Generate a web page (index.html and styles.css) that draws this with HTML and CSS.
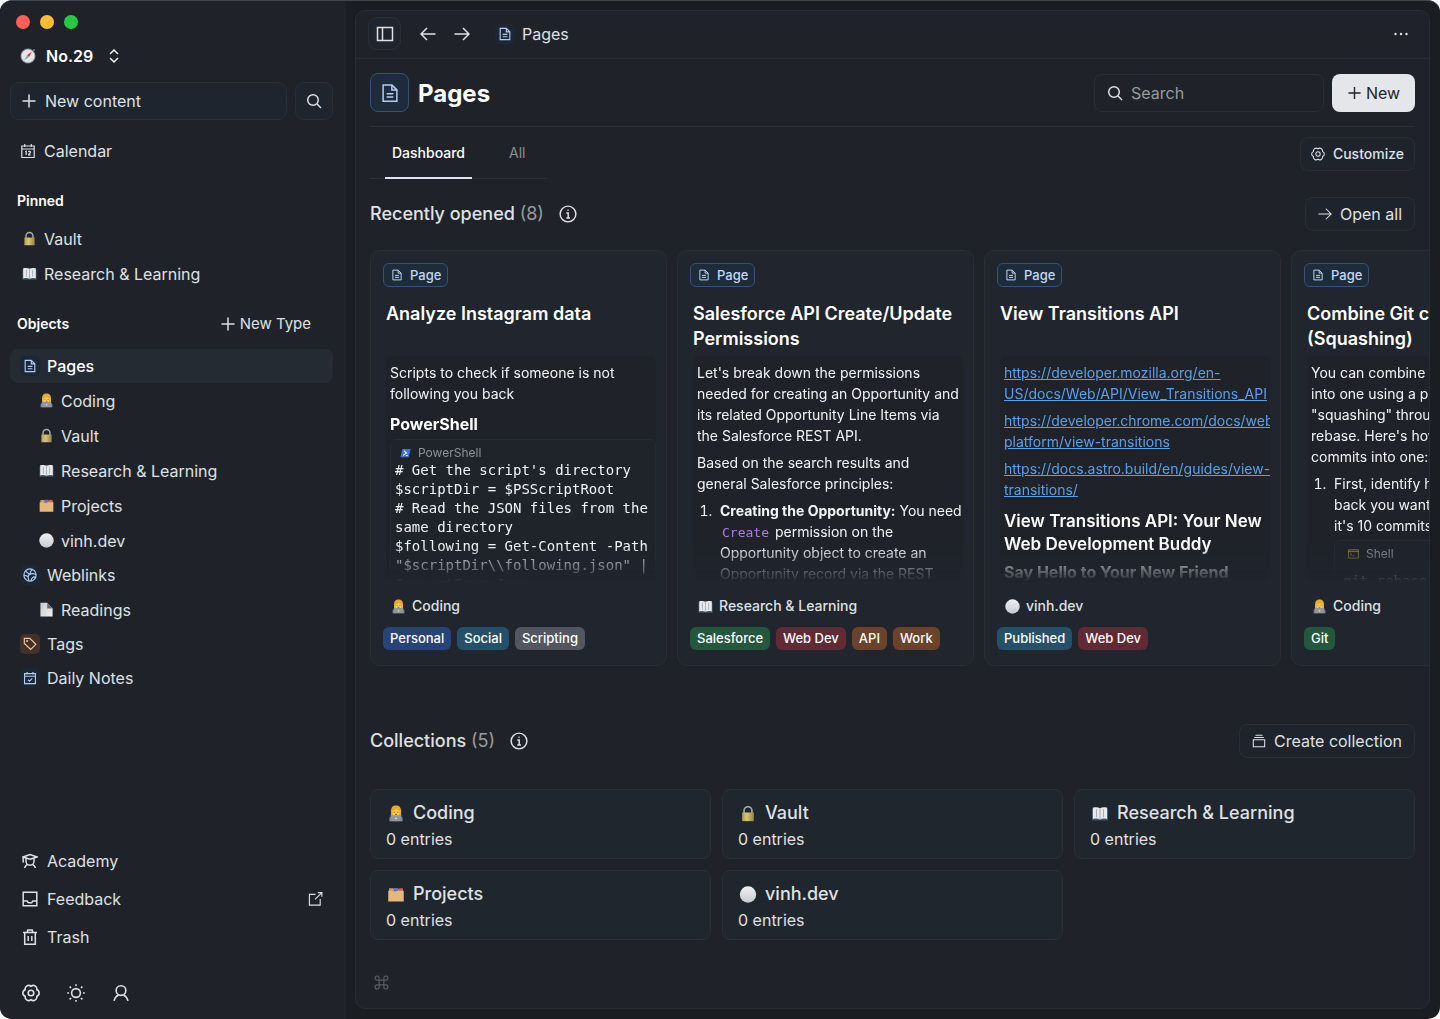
FILE: index.html
```html
<!DOCTYPE html>
<html lang="en">
<head>
    <meta charset="UTF-8">
    <meta name="viewport" content="width=device-width, initial-scale=1">
    <title>Pages</title>
    <link rel="stylesheet" href="styles.css">
</head>
<body>

    <!-- Icon sprite -->
    <svg class="sprite" aria-hidden="true">
        <symbol id="i-page" viewBox="0 0 16 16"><path d="M2.5 1.5h7l4 4v9h-11zM9.5 1.5v4h4M5.3 8.5h5.4M5.3 11.2h5.4"/></symbol>
        <symbol id="i-plus" viewBox="0 0 16 16"><path d="M8 1.5v13M1.5 8h13"/></symbol>
        <symbol id="i-search" viewBox="0 0 16 16"><circle cx="7" cy="7" r="5.3"/><path d="M11 11l4 4"/></symbol>
        <symbol id="i-updown" viewBox="0 0 12 16"><path d="M2 6l4-4 4 4M2 10l4 4 4-4"/></symbol>
        <symbol id="i-calendar" viewBox="0 0 16 16"><path d="M1.8 3h12.4v11.5H1.8zM1.8 6h12.4M4.7 1v3M11.3 1v3M5.2 9l1-.6V12M8.5 9c.3-.9 2.2-.8 2 .4C10.3 10.3 8.5 11 8.5 12h2.3"/></symbol>
        <symbol id="i-daily" viewBox="0 0 16 16"><path d="M1.8 3h12.4v11.5H1.8zM1.8 6h12.4M4.7 1v3M11.3 1v3M5.7 10l1.7 1.7 3.2-3.2"/></symbol>
        <symbol id="i-globe" viewBox="0 0 16 16"><circle cx="8" cy="8" r="7"/><path d="M3 3c1 2.8 3 2.5 5 4M10.8 1.7C8.7 3 8 4.5 8 7M8 7c2.5-.8 4.5-.8 6.8.5M8 7c-2 1-2.500 3-2 4.500s.8 2.200.5 3.200M1 8c1.800.2 3.500.8 5 2.500M9 15c.2-2 1-3.800 3-4.800l2.500.2"/></symbol>
        <symbol id="i-tag" viewBox="0 0 16 16"><path d="M1.5 1.5h6.3l6.9 6.9-5.9 5.9-7.3-6.9z"/><circle cx="4.7" cy="4.7" r=".5"/></symbol>
        <symbol id="i-academy" viewBox="0 0 16 16"><path d="M1 4l7-2.500L15 4 8 6.200zM1.200 4v5.500M4 5.200v3a4 4 0 0 0 8 0v-3M2.500 15c.6-1.900 1.600-3 3.200-3.700M13.500 15c-.6-1.900-1.600-3-3.200-3.700"/></symbol>
        <symbol id="i-inbox" viewBox="0 0 16 16"><path d="M1.2 1.2h13.6v13.6H1.2zM1.2 10h4l1.2 1.8h3.2L10.8 10h4"/></symbol>
        <symbol id="i-trash" viewBox="0 0 16 16"><path d="M1 3.5h14M2.7 3.5v11.7h10.6V3.5M5.2 3.5l.6-2.4h4.4l.6 2.4M6.2 7v5M9.8 7v5"/></symbol>
        <symbol id="i-external" viewBox="0 0 16 16"><path d="M8 3H1.5v11.5H13V8M10.5 1.2h4.3v4.3M14.5 1.5l-7 7"/></symbol>
        <symbol id="i-gear" viewBox="0 0 16 16"><path stroke-linejoin="round" d="M8 2.1A3.1 3.1 0 0 1 13.1 5.05A3.1 3.1 0 0 1 13.1 10.95A3.1 3.1 0 0 1 8 13.9A3.1 3.1 0 0 1 2.9 10.95A3.1 3.1 0 0 1 2.9 5.05A3.1 3.1 0 0 1 8 2.1z"/><circle cx="8" cy="8" r="2.5"/></symbol>
        <symbol id="i-sun" viewBox="0 0 16 16"><circle cx="8" cy="8" r="3.9"/><path d="M8 .2v1.6M8 14.2v1.6M.2 8h1.6M14.2 8h1.6M2.3 2.3l1.3 1.3M12.4 12.4l1.3 1.3M13.7 2.3l-1.3 1.3M3.6 12.4l-1.3 1.3"/></symbol>
        <symbol id="i-user" viewBox="0 0 16 16"><circle cx="8" cy="5.8" r="4.3"/><path d="M1.8 15c.7-2.7 2-4.3 4-5.2M14.2 15c-.7-2.7-2-4.3-4-5.2"/></symbol>
        <symbol id="i-sidebar" viewBox="0 0 18 16"><path d="M1.5 1.5h15v13h-15zM6.5 1.5v13"/></symbol>
        <symbol id="i-left" viewBox="0 0 16 16"><path d="M15.5 8H1M7 2L1 8l6 6"/></symbol>
        <symbol id="i-right" viewBox="0 0 16 16"><path d="M.5 8H15M9 2l6 6-6 6"/></symbol>
        <symbol id="i-dots" viewBox="0 0 16 16"><g fill="currentColor" stroke="none"><circle cx="2.5" cy="8" r="1.2"/><circle cx="8" cy="8" r="1.2"/><circle cx="13.5" cy="8" r="1.2"/></g></symbol>
        <symbol id="i-info" viewBox="0 0 16 16"><circle cx="8" cy="8" r="7"/><path d="M6.5 7.2h1.7v4M6.5 11.5h3.3M7.5 4.7h1"/></symbol>
        <symbol id="i-stack" viewBox="0 0 16 16"><path d="M1.5 6.5h13v8h-13zM2.5 4h11M4 1.5h8"/></symbol>
        <symbol id="i-command" viewBox="0 0 16 16"><path d="M5.5 5.5h5v5h-5zM5.5 5.5H3.3a2.2 2.2 0 1 1 2.2-2.2zM10.5 5.5V3.3a2.2 2.2 0 1 1 2.2 2.2zM10.5 10.5h2.2a2.2 2.2 0 1 1-2.2 2.2zM5.5 10.5v2.2a2.2 2.2 0 1 1-2.2-2.2z"/></symbol>

        <linearGradient id="g-ball" x2="0" y2="1"><stop stop-color="#f1f2f4"/><stop offset="1" stop-color="#c6c9cf"/></linearGradient>
        <linearGradient id="g-lock"><stop stop-color="#b09a50"/><stop offset=".4" stop-color="#d8c581"/><stop offset="1" stop-color="#948443"/></linearGradient>
        <linearGradient id="g-sheet" x2="1" y2="1"><stop stop-color="#c9cacc"/><stop offset="1" stop-color="#f0f0f0"/></linearGradient>
        <symbol id="e-compass" viewBox="0 0 16 16"><circle cx="14" cy="2" r="1" fill="#777"/><circle cx="8" cy="8" r="7.5" fill="#8f949a"/><circle cx="8" cy="8" r="6.5" fill="#e4e7ea"/><path d="M12 3.5L9 9 7 7.2z" fill="#d8352f"/><path d="M4 12.5L7 7.2 9 9z" fill="#9aa3ad"/></symbol>
        <symbol id="e-lock" viewBox="0 0 16 16"><path d="M4.3 8V5.3a3.7 3.7 0 0 1 7.4 0V8" fill="none" stroke="#a9aeb5" stroke-width="1.5"/><path d="M2.5 7h11v8.2h-11z" fill="url(#g-lock)"/></symbol>
        <symbol id="e-book" viewBox="0 0 16 16"><path d="M.5 3.5h15v11H.5z" fill="#3d5c74"/><path d="M1.3 2.5C4 1.7 6.5 2 8 3c1.5-1 4-1.3 6.7-.5v10.7C12 12.5 9.5 12.6 8 13.6c-1.5-1-4-1.1-6.7-.4z" fill="#e9eaed"/><path d="M8 3v10.5M4.7 4v7.5M11.3 4v7.5" stroke="#a3a7ae" stroke-width=".9" fill="none"/></symbol>
        <symbol id="e-coder" viewBox="0 0 16 16"><path d="M3.2 6C3.2 2 5 .5 8 .5s4.8 1.5 4.8 5.5v5H3.2z" fill="#e7a82c"/><path d="M4.8 5.5C6.5 5.3 8 4.5 8.5 3.6c.8 1.2 1.7 1.7 2.7 1.900v2C11.200 9.700 9.700 10.500 8 10.500S4.800 9.700 4.800 7.500z" fill="#ffd04c"/><path d="M6.3 6.3v1M9.7 6.3v1M7 8.8h2" stroke="#6b4514" stroke-width=".8"/><path d="M1.5 15.2V12l2-1.5h9l2 1.5v3.2z" fill="#4e6398"/><path d="M3 9.7h10l.7 5.5H2.3z" fill="#92969c"/><circle cx="8" cy="12.6" r=".8" fill="#dfe2e6"/></symbol>
        <symbol id="e-folder" viewBox="0 0 16 16"><path d="M1.5 2h4l1 1h8v6h-13z" fill="#d49b60"/><path d="M6 1.8h4V5H6z" fill="#5d71bd"/><path d="M10.5 2h4V5h-4z" fill="#d75a4b"/><path d="M.7 4.5h3.5l1 1h3l1-1h6.1v10.2H.7z" fill="#e5b880"/></symbol>
        <symbol id="e-ball" viewBox="0 0 16 16"><circle cx="8" cy="8" r="7.7" fill="url(#g-ball)"/></symbol>
        <symbol id="e-sheet" viewBox="0 0 16 16"><path d="M1.5.8h7.2l5.8 6v8.6h-13z" fill="url(#g-sheet)"/><path d="M8.7.8v6h5.8z" fill="#6b6e73"/></symbol>
        <symbol id="e-powershell" viewBox="0 0 16 14"><path d="M3.5 1h12l-3 12h-12z" fill="#3d73d6"/><path d="M5.5 3.5l4 3.5-5 3.5M8.5 10.5h3" fill="none" stroke="#fff" stroke-width="1.5"/></symbol>
        <symbol id="e-shell" viewBox="0 0 16 14"><path d="M.8 1h14.4v12H.8zM.8 3.5h14.4M3.5 6l2 1.5-2 1.5M6.8 9.5h2.5" fill="none" stroke="#a98b2a" stroke-width="1.2"/></symbol>
    </svg>

    <div class="window">
        <aside class="sidebar">
            <div class="lights"><span class="red"></span><span class="yellow"></span><span class="green"></span></div>

            <button class="workspace"><svg class="emoji"><use href="#e-compass"/></svg>No.29<svg class="icon"><use href="#i-updown"/></svg></button>

            <div class="create">
                <button class="box new-content"><svg class="icon"><use href="#i-plus"/></svg>New content</button>
                <button class="box find" aria-label="Search"><svg class="icon"><use href="#i-search"/></svg></button>
            </div>

            <a class="nav-link calendar" href="#"><svg class="icon"><use href="#i-calendar"/></svg>Calendar</a>

            <h2 class="side-title">Pinned</h2>
            <nav class="pinned">
                <a class="nav-link child" href="#"><svg class="emoji"><use href="#e-lock"/></svg>Vault</a>
                <a class="nav-link child" href="#"><svg class="emoji"><use href="#e-book"/></svg>Research &amp; Learning</a>
            </nav>

            <div class="objects-head">
                <h2 class="side-title">Objects</h2>
                <button class="new-type"><svg class="icon"><use href="#i-plus"/></svg>New Type</button>
            </div>
            <nav class="objects">
                <a class="nav-link active" href="#"><span class="tile blue"><svg class="icon"><use href="#i-page"/></svg></span>Pages</a>
                <a class="nav-link child" href="#"><svg class="emoji"><use href="#e-coder"/></svg>Coding</a>
                <a class="nav-link child" href="#"><svg class="emoji"><use href="#e-lock"/></svg>Vault</a>
                <a class="nav-link child" href="#"><svg class="emoji"><use href="#e-book"/></svg>Research &amp; Learning</a>
                <a class="nav-link child" href="#"><svg class="emoji"><use href="#e-folder"/></svg>Projects</a>
                <a class="nav-link child" href="#"><svg class="emoji"><use href="#e-ball"/></svg>vinh.dev</a>
                <a class="nav-link" href="#"><span class="tile blue"><svg class="icon"><use href="#i-globe"/></svg></span>Weblinks</a>
                <a class="nav-link child" href="#"><svg class="emoji"><use href="#e-sheet"/></svg>Readings</a>
                <a class="nav-link" href="#"><span class="tile orange"><svg class="icon"><use href="#i-tag"/></svg></span>Tags</a>
                <a class="nav-link" href="#"><span class="tile blue"><svg class="icon"><use href="#i-daily"/></svg></span>Daily Notes</a>
            </nav>

            <nav class="side-footer">
                <a class="nav-link" href="#"><svg class="icon"><use href="#i-academy"/></svg>Academy</a>
                <a class="nav-link" href="#"><svg class="icon"><use href="#i-inbox"/></svg>Feedback<svg class="icon external"><use href="#i-external"/></svg></a>
                <a class="nav-link" href="#"><svg class="icon"><use href="#i-trash"/></svg>Trash</a>
            </nav>
            <div class="side-tools">
                <button aria-label="Settings"><svg class="icon"><use href="#i-gear"/></svg></button>
                <button aria-label="Theme"><svg class="icon"><use href="#i-sun"/></svg></button>
                <button aria-label="Account"><svg class="icon"><use href="#i-user"/></svg></button>
            </div>
        </aside>

        <main class="panel">
            <div class="topbar">
                <button class="box toggle" aria-label="Toggle sidebar"><svg class="icon"><use href="#i-sidebar"/></svg></button>
                <button class="arrow" aria-label="Back"><svg class="icon"><use href="#i-left"/></svg></button>
                <button class="arrow" aria-label="Forward"><svg class="icon"><use href="#i-right"/></svg></button>
                <a class="crumb" href="#"><span class="tile blue"><svg class="icon"><use href="#i-page"/></svg></span>Pages</a>
                <button class="more" aria-label="More"><svg class="icon"><use href="#i-dots"/></svg></button>
            </div>

            <div class="content">
                <header class="page-head">
                    <span class="page-icon"><svg class="icon"><use href="#i-page"/></svg></span>
                    <h1>Pages</h1>
                    <label class="search"><svg class="icon"><use href="#i-search"/></svg><input type="search" placeholder="Search" aria-label="Search"></label>
                    <button class="new-btn"><svg class="icon"><use href="#i-plus"/></svg>New</button>
                </header>

                <div class="tab-row">
                    <nav class="tabs">
                        <a class="tab selected" href="#">Dashboard</a>
                        <a class="tab" href="#">All</a>
                    </nav>
                    <button class="box action customize"><svg class="icon"><use href="#i-gear"/></svg>Customize</button>
                </div>

                <div class="section-head">
                    <h2>Recently opened <span>(8)</span></h2>
                    <svg class="icon"><use href="#i-info"/></svg>
                    <button class="box action"><svg class="icon"><use href="#i-right"/></svg>Open all</button>
                </div>

                <div class="cards">
                    <article class="card">
                        <span class="badge"><svg class="icon"><use href="#i-page"/></svg>Page</span>
                        <h3>Analyze Instagram data</h3>
                        <div class="preview">
                            <p>Scripts to check if someone is not following you back</p>
                            <h5>PowerShell</h5>
                            <div class="code">
                                <div class="code-lang"><svg class="emoji"><use href="#e-powershell"/></svg>PowerShell</div>
                                <pre># Get the script's directory
$scriptDir = $PSScriptRoot
# Read the JSON files from the same directory
$following = Get-Content -Path "$scriptDir\\following.json" | ConvertFrom-Json</pre>
                            </div>
                        </div>
                        <a class="collection-chip" href="#"><svg class="emoji"><use href="#e-coder"/></svg>Coding</a>
                        <div class="tags"><span class="tag t-blue">Personal</span><span class="tag t-cyan">Social</span><span class="tag t-gray">Scripting</span></div>
                    </article>

                    <article class="card">
                        <span class="badge"><svg class="icon"><use href="#i-page"/></svg>Page</span>
                        <h3>Salesforce API Create/Update Permissions</h3>
                        <div class="preview">
                            <p>Let's break down the permissions needed for creating an Opportunity and its related Opportunity Line Items via the Salesforce REST API.</p>
                            <p>Based on the search results and general Salesforce principles:</p>
                            <ol>
                                <li><strong>Creating the Opportunity:</strong> You need <code>Create</code> permission on the Opportunity object to create an Opportunity record via the REST API.</li>
                            </ol>
                        </div>
                        <a class="collection-chip" href="#"><svg class="emoji"><use href="#e-book"/></svg>Research &amp; Learning</a>
                        <div class="tags"><span class="tag t-green">Salesforce</span><span class="tag t-red">Web Dev</span><span class="tag t-brown">API</span><span class="tag t-brown">Work</span></div>
                    </article>

                    <article class="card">
                        <span class="badge"><svg class="icon"><use href="#i-page"/></svg>Page</span>
                        <h3>View Transitions API</h3>
                        <div class="preview">
                            <p><a href="#">https://developer.mozilla.org/en-US/docs/Web/API/View_Transitions_API</a></p>
                            <p><a href="#">https://developer.chrome.com/docs/web-platform/view-transitions</a></p>
                            <p><a href="#">https://docs.astro.build/en/guides/view-transitions/</a></p>
                            <h4>View Transitions API: Your New Web Development Buddy</h4>
                            <h5>Say Hello to Your New Friend</h5>
                        </div>
                        <a class="collection-chip" href="#"><svg class="emoji"><use href="#e-ball"/></svg>vinh.dev</a>
                        <div class="tags"><span class="tag t-cyan">Published</span><span class="tag t-red">Web Dev</span></div>
                    </article>

                    <article class="card">
                        <span class="badge"><svg class="icon"><use href="#i-page"/></svg>Page</span>
                        <h3>Combine Git commits (Squashing)</h3>
                        <div class="preview">
                            <p>You can combine multiple Git commits into one using a process called "squashing" through an interactive rebase. Here's how to squash several commits into one:</p>
                            <ol>
                                <li>First, identify how many commits back you want to go. Let's assume it's 10 commits:
                                    <div class="code">
                                        <div class="code-lang"><svg class="emoji"><use href="#e-shell"/></svg>Shell</div>
                                        <pre>git rebase -i HEAD~10</pre>
                                    </div>
                                </li>
                            </ol>
                        </div>
                        <a class="collection-chip" href="#"><svg class="emoji"><use href="#e-coder"/></svg>Coding</a>
                        <div class="tags"><span class="tag t-green">Git</span></div>
                    </article>
                </div>

                <div class="section-head collections-head">
                    <h2>Collections <span>(5)</span></h2>
                    <svg class="icon"><use href="#i-info"/></svg>
                    <button class="box action"><svg class="icon"><use href="#i-stack"/></svg>Create collection</button>
                </div>

                <div class="collections">
                    <a class="collection" href="#"><strong><svg class="emoji"><use href="#e-coder"/></svg>Coding</strong>0 entries</a>
                    <a class="collection" href="#"><strong><svg class="emoji"><use href="#e-lock"/></svg>Vault</strong>0 entries</a>
                    <a class="collection" href="#"><strong><svg class="emoji"><use href="#e-book"/></svg>Research &amp; Learning</strong>0 entries</a>
                    <a class="collection" href="#"><strong><svg class="emoji"><use href="#e-folder"/></svg>Projects</strong>0 entries</a>
                    <a class="collection" href="#"><strong><svg class="emoji"><use href="#e-ball"/></svg>vinh.dev</strong>0 entries</a>
                </div>

                <svg class="icon command"><use href="#i-command"/></svg>
            </div>
        </main>
    </div>

</body>
</html>
```

FILE: styles.css
```css
* {
    box-sizing: border-box;
}
body {
    margin: 0;
    background: #fff;
    color: #dfe1e5;
    font-family: 'Inter', sans-serif;
    font-size: 16px;
    line-height: 20px;
}
h1, h2, h3, h4, h5, p, pre, ol {
    margin: 0;
}
a {
    color: inherit;
    text-decoration: none;
}
button, input {
    font: inherit;
    color: inherit;
    background: none;
    border: none;
    padding: 0;
}
button {
    cursor: pointer;
}
.sprite {
    position: absolute;
    width: 0;
    height: 0;
}
.icon {
    width: 16px;
    height: 16px;
    flex: none;
    fill: none;
    stroke: currentColor;
    stroke-width: 1.5;
}
.emoji {
    width: 15px;
    height: 15px;
    flex: none;
}
.window {
    display: flex;
    gap: 9px;
    min-height: 100vh;
    padding: 0 10px 10px 0;
    background: #1a1d21;
    border-radius: 12px;
    border-top: 1px solid #43474b;
    overflow: hidden;
}
.box {
    display: flex;
    align-items: center;
    background: #1f252e;
    border: 1px solid #2a2f37;
    border-radius: 9px;
}

/* Sidebar */
.sidebar {
    width: 346px;
    flex: none;
    display: flex;
    flex-direction: column;
    margin-bottom: -10px;
    padding: 14px 13px 17px 10px;
    background: #1f2329;
}
.lights {
    display: flex;
    gap: 10px;
    padding-left: 6px;
}
.lights span {
    width: 14px;
    height: 14px;
    border-radius: 50%;
}
.lights .red { background: #ff5f57; }
.lights .yellow { background: #febc2e; }
.lights .green { background: #28c840; }
.workspace {
    display: flex;
    align-items: center;
    gap: 10px;
    align-self: flex-start;
    margin-top: 16px;
    padding-left: 10px;
    color: #fff;
    font-weight: 600;
    line-height: 22px;
}
.workspace .emoji {
    width: 16px;
    height: 16px;
}
.workspace .icon {
    width: 12px;
    margin-left: 5px;
}
.create {
    display: flex;
    gap: 8px;
    margin-top: 15px;
}
.create .box {
    height: 38px;
}
.new-content {
    flex: 1;
    gap: 8px;
    padding-left: 10px;
}
.find {
    width: 38px;
    justify-content: center;
}
.nav-link {
    display: flex;
    align-items: center;
    gap: 7px;
    height: 34px;
    padding: 0 10px;
    border-radius: 8px;
}
.nav-link.child {
    height: 35px;
    padding-left: 29px;
}
.nav-link.active {
    background: #242b33;
    color: #fff;
    font-weight: 500;
}
.calendar {
    margin-top: 14px;
    gap: 8px;
}
.calendar .icon {
    stroke-width: 1.2;
}
.side-title {
    padding-left: 7px;
    color: #fff;
    font-size: 14px;
    font-weight: 600;
}
.calendar + .side-title {
    margin-top: 23px;
}
.pinned {
    margin-top: 10px;
}
.pinned .nav-link {
    padding-left: 12px;
}
.objects-head {
    display: flex;
    align-items: center;
    justify-content: space-between;
    margin-top: 23px;
    padding-right: 22px;
}
.new-type {
    display: flex;
    align-items: center;
    gap: 4px;
    font-size: 15px;
}
.objects {
    margin-top: 15px;
}
.tile {
    display: flex;
    align-items: center;
    justify-content: center;
    width: 20px;
    height: 20px;
    border-radius: 5px;
}
.tile .icon {
    width: 14px;
    height: 14px;
    stroke-width: 1.3;
}
.blue {
    background: #1c2735;
    color: #b3cdf2;
}
.orange {
    background: #44302a;
    color: #f3c9a4;
}
.side-footer {
    margin-top: auto;
}
.side-footer .nav-link {
    height: 38px;
    padding-left: 12px;
    gap: 9px;
}
.side-footer .external {
    width: 15px;
    margin-left: auto;
    stroke-width: 1.2;
}
.side-tools {
    display: flex;
    gap: 27px;
    margin-top: 28px;
    padding-left: 12px;
}
.side-tools button {
    display: flex;
}
.side-tools .icon {
    width: 18px;
    height: 18px;
    stroke-width: 1.4;
}

/* Main panel */
.panel {
    flex: 1;
    min-width: 0;
    margin-top: 9px;
    background: #1f2329;
    border: 1px solid #292d32;
    border-radius: 10px;
    overflow: hidden;
}
.topbar {
    display: flex;
    align-items: center;
    height: 48px;
    padding: 0 20px 2px 12px;
    border-bottom: 1px solid #292d32;
}
.topbar button {
    display: flex;
    align-items: center;
    justify-content: center;
}
.toggle {
    width: 33px;
    height: 33px;
    margin-right: 10px;
}
.toggle .icon {
    width: 18px;
}
.arrow {
    width: 34px;
    height: 32px;
}
.crumb {
    display: flex;
    align-items: center;
    gap: 7px;
    margin-left: 16px;
}
.more {
    margin-left: auto;
}
.content {
    padding: 14px 14px 16px;
}
.page-head {
    display: flex;
    align-items: center;
    padding-bottom: 14px;
    border-bottom: 1px solid #2d3136;
}
.page-icon {
    display: flex;
    align-items: center;
    justify-content: center;
    width: 39px;
    height: 39px;
    border: 1px solid #345377;
    border-radius: 8px;
    background: #1e2b3b;
    color: #b3cdf2;
}
.page-icon .icon {
    width: 20px;
    height: 20px;
    stroke-width: 1.2;
}
.page-head h1 {
    margin: 0 auto 0 9px;
    padding-top: 2px;
    color: #fff;
    font-size: 24px;
    font-weight: 700;
    line-height: 30px;
}
.search {
    display: flex;
    align-items: center;
    gap: 8px;
    width: 230px;
    height: 38px;
    padding: 0 12px;
    border: 1px solid #2a2f34;
    border-radius: 8px;
}
.search input {
    flex: 1;
    min-width: 0;
    outline: none;
}
.search input::placeholder {
    color: #989b9f;
    opacity: 1;
}
.new-btn {
    display: flex;
    align-items: center;
    justify-content: center;
    gap: 4px;
    width: 83px;
    height: 38px;
    margin-left: 8px;
    border-radius: 8px;
    background: #e4e6ea;
    color: #1f2329;
}
.new-btn .icon {
    width: 15px;
}
.tab-row {
    display: flex;
    justify-content: space-between;
    align-items: flex-start;
}
.tabs {
    display: flex;
    padding: 0 15px;
    border-bottom: 1px solid #2d3136;
    font-size: 14px;
}
.tab {
    padding: 16px 7px 14px;
    margin-bottom: -1px;
    border-bottom: 2px solid transparent;
    color: #8b8e93;
}
.tab.selected {
    margin-right: 30px;
    border-color: #dfe5ee;
    color: #fff;
    font-weight: 500;
}
.action {
    height: 34px;
    gap: 8px;
    padding: 0 12px;
    background: #1f242c;
    border-radius: 8px;
}
.action .icon {
    width: 14px;
    height: 14px;
    stroke-width: 1.2;
}
.customize {
    margin-top: 10px;
    padding: 0 10px;
    font-size: 14px;
    font-weight: 500;
}
.section-head {
    display: flex;
    align-items: center;
    margin-top: 18px;
}
.section-head h2 {
    font-size: 18px;
    font-weight: 500;
    line-height: 24px;
}
.section-head h2 span {
    color: #989b9f;
    font-weight: 400;
}
.section-head > .icon {
    width: 18px;
    height: 18px;
    margin: 0 auto 0 15px;
    stroke-width: 1.3;
}

/* Recently opened */
.cards {
    display: grid;
    grid-auto-flow: column;
    grid-auto-columns: 297px;
    gap: 10px;
    margin: 19px -14px 0 0;
    overflow: hidden;
}
.card {
    height: 416px;
    padding: 12px 10px 12px 12px;
    border: 1px solid #292e35;
    border-radius: 10px;
    background: #20252e;
}
.badge {
    display: flex;
    align-items: center;
    gap: 7px;
    width: fit-content;
    height: 24px;
    padding: 0 6px 0 7px;
    border: 1px solid #345377;
    border-radius: 6px;
    background: #1e2b3b;
    color: #c3d9f5;
    font-size: 13px;
    font-weight: 500;
}
.badge .icon {
    width: 12px;
    height: 12px;
    stroke-width: 1.3;
}
.card h3 {
    min-height: 50px;
    margin: 14px 0 5px 3px;
    color: #fff;
    font-size: 18px;
    font-weight: 600;
    line-height: 25px;
}
.preview {
    height: 226px;
    margin-left: 3px;
    padding: 6px 0 0 4px;
    border-radius: 6px;
    background: #1f2329;
    color: #f3f4f6;
    font-size: 14px;
    line-height: 21px;
    overflow: hidden;
    mask-image: linear-gradient(#000 84%, transparent);
}
.preview p {
    margin-bottom: 6px;
}
.preview p a {
    color: #5c9fe8;
    text-decoration: underline;
}
.preview h4 {
    margin: 10px 0 5px;
    color: #fff;
    font-size: 17px;
    font-weight: 600;
    line-height: 23px;
}
.preview h5 {
    margin-top: 9px;
    color: #fff;
    font-size: 16px;
    font-weight: 700;
    line-height: 22px;
}
.preview h4 + h5 {
    margin-top: 5px;
}
.preview ol {
    padding-left: 19px;
}
.preview li {
    padding-left: 4px;
}
.preview code {
    padding: 0 2px;
    color: #b07ce0;
    font-family: 'DejaVu Sans Mono', monospace;
    font-size: 13px;
    line-height: 16px;
}
.code {
    margin-top: 4px;
    padding: 5px 0 0 4px;
    border: 1px solid #272b31;
    border-radius: 6px;
    background: #1f242b;
}
.code-lang {
    display: flex;
    align-items: center;
    gap: 7px;
    padding-left: 5px;
    color: #8f9297;
    font-size: 12px;
    line-height: 16px;
}
.code-lang .emoji {
    width: 11px;
    height: 10px;
}
.code pre {
    font-family: 'DejaVu Sans Mono', monospace;
    font-size: 14px;
    line-height: 19px;
    white-space: pre-wrap;
}
li .code {
    padding-left: 8px;
}
li .code pre {
    padding-top: 10px;
}
.collection-chip {
    display: flex;
    align-items: center;
    width: fit-content;
    gap: 6px;
    height: 26px;
    margin: 11px 0 8px 8px;
    font-size: 14px;
    font-weight: 500;
}
.tags {
    display: flex;
    gap: 6px;
}
.tag {
    padding: 0 7px;
    border-radius: 6px;
    color: #fff;
    font-size: 13px;
    font-weight: 500;
    line-height: 23px;
}
.t-blue { background: #28427a; }
.t-cyan { background: #264f68; }
.t-gray { background: #515660; }
.t-green { background: #24573e; }
.t-red { background: #612a35; }
.t-brown { background: #6b422b; }

/* Collections */
.collections-head {
    margin-top: 58px;
}
.collections {
    display: grid;
    grid-template-columns: repeat(3, 1fr);
    gap: 11px;
    margin-top: 31px;
}
.collection {
    height: 70px;
    padding: 10px 15px;
    border: 1px solid #2a2f37;
    border-radius: 8px;
    background: #20262e;
}
.collection strong {
    display: flex;
    align-items: center;
    gap: 8px;
    margin-bottom: 3px;
    font-size: 18px;
    font-weight: 500;
    line-height: 26px;
}
.collection .emoji {
    width: 18px;
    height: 17px;
    margin-left: 1px;
}
.command {
    display: block;
    width: 15px;
    height: 15px;
    margin: 35px 0 0 4px;
    color: #5a5e63;
    stroke-width: 1.2;
}
```
